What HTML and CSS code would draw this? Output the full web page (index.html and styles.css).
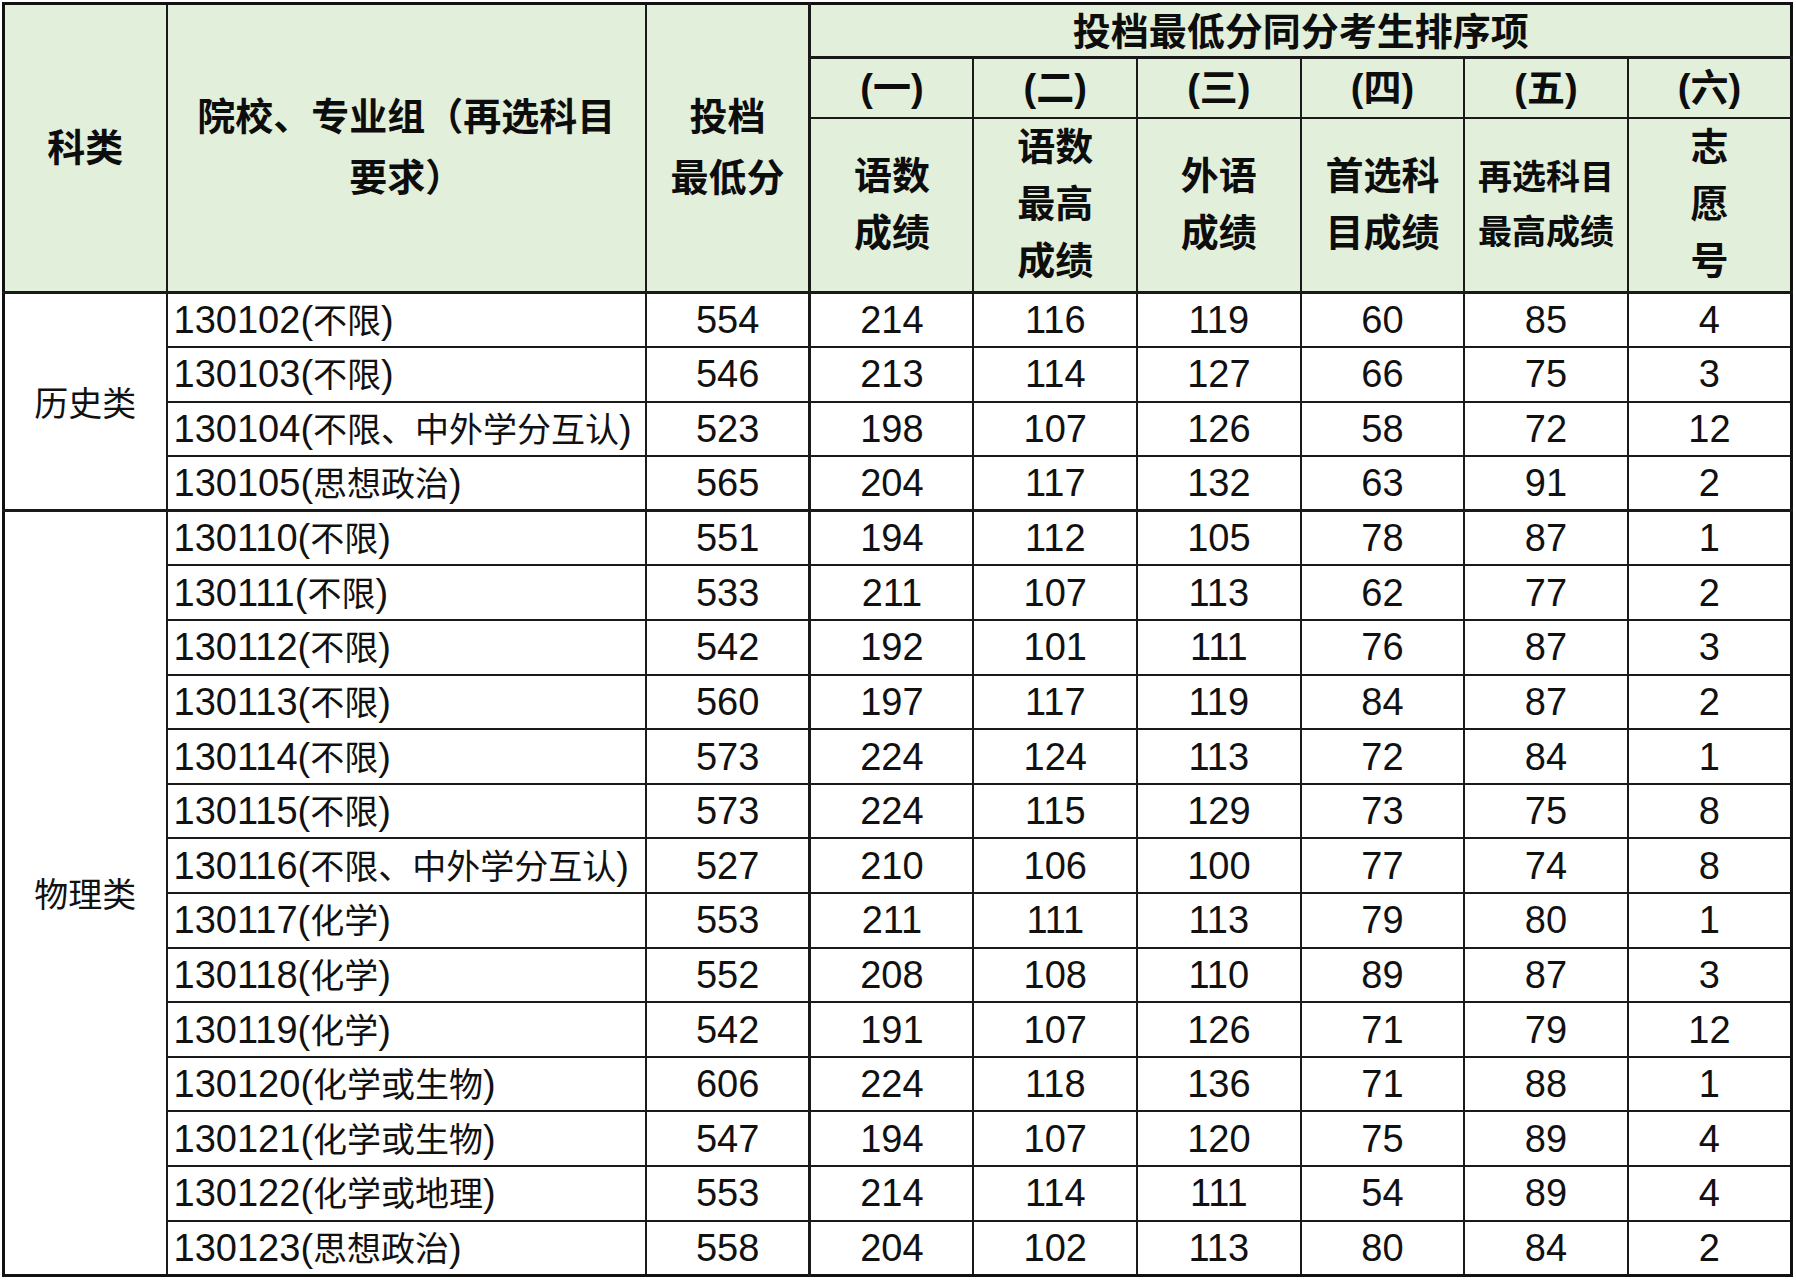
FILE: index.html
```html
<!DOCTYPE html>
<html lang="zh-CN">
<head>
<meta charset="utf-8">
<title>投档最低分同分考生排序项</title>
<link rel="stylesheet" href="styles.css">
</head>
<body>
<table class="sheet">
  <colgroup>
    <col class="c-cat">
    <col class="c-group">
    <col class="c-min">
    <col class="c-s"><col class="c-s"><col class="c-s"><col class="c-s"><col class="c-s"><col class="c-s">
  </colgroup>
  <thead>
    <tr class="h1">
      <th rowspan="3" class="cat">科类</th>
      <th rowspan="3">院校、专业组（再选科目<br>要求）</th>
      <th rowspan="3" class="min">投档<br>最低分</th>
      <th colspan="6" class="span">投档最低分同分考生排序项</th>
    </tr>
    <tr class="h2">
      <th class="first">(一)</th><th>(二)</th><th>(三)</th><th>(四)</th><th>(五)</th><th>(六)</th>
    </tr>
    <tr class="h3">
      <th class="first">语数<br>成绩</th>
      <th>语数<br>最高<br>成绩</th>
      <th>外语<br>成绩</th>
      <th>首选科<br>目成绩</th>
      <th class="small">再选科目<br>最高成绩</th>
      <th>志<br>愿<br>号</th>
    </tr>
  </thead>
  <tbody>
    <tr><td rowspan="4" class="cat">历史类</td><td class="grp">130102(<span class="zh">不限</span>)</td><td>554</td><td class="first">214</td><td>116</td><td>119</td><td>60</td><td>85</td><td>4</td></tr>
    <tr><td class="grp">130103(<span class="zh">不限</span>)</td><td>546</td><td class="first">213</td><td>114</td><td>127</td><td>66</td><td>75</td><td>3</td></tr>
    <tr><td class="grp">130104(<span class="zh">不限、中外学分互认</span>)</td><td>523</td><td class="first">198</td><td>107</td><td>126</td><td>58</td><td>72</td><td>12</td></tr>
    <tr><td class="grp">130105(<span class="zh">思想政治</span>)</td><td>565</td><td class="first">204</td><td>117</td><td>132</td><td>63</td><td>91</td><td>2</td></tr>
    <tr class="sep"><td rowspan="14" class="cat">物理类</td><td class="grp">130110(<span class="zh">不限</span>)</td><td>551</td><td class="first">194</td><td>112</td><td>105</td><td>78</td><td>87</td><td>1</td></tr>
    <tr><td class="grp">130111(<span class="zh">不限</span>)</td><td>533</td><td class="first">211</td><td>107</td><td>113</td><td>62</td><td>77</td><td>2</td></tr>
    <tr><td class="grp">130112(<span class="zh">不限</span>)</td><td>542</td><td class="first">192</td><td>101</td><td>111</td><td>76</td><td>87</td><td>3</td></tr>
    <tr><td class="grp">130113(<span class="zh">不限</span>)</td><td>560</td><td class="first">197</td><td>117</td><td>119</td><td>84</td><td>87</td><td>2</td></tr>
    <tr><td class="grp">130114(<span class="zh">不限</span>)</td><td>573</td><td class="first">224</td><td>124</td><td>113</td><td>72</td><td>84</td><td>1</td></tr>
    <tr><td class="grp">130115(<span class="zh">不限</span>)</td><td>573</td><td class="first">224</td><td>115</td><td>129</td><td>73</td><td>75</td><td>8</td></tr>
    <tr><td class="grp">130116(<span class="zh">不限、中外学分互认</span>)</td><td>527</td><td class="first">210</td><td>106</td><td>100</td><td>77</td><td>74</td><td>8</td></tr>
    <tr><td class="grp">130117(<span class="zh">化学</span>)</td><td>553</td><td class="first">211</td><td>111</td><td>113</td><td>79</td><td>80</td><td>1</td></tr>
    <tr><td class="grp">130118(<span class="zh">化学</span>)</td><td>552</td><td class="first">208</td><td>108</td><td>110</td><td>89</td><td>87</td><td>3</td></tr>
    <tr><td class="grp">130119(<span class="zh">化学</span>)</td><td>542</td><td class="first">191</td><td>107</td><td>126</td><td>71</td><td>79</td><td>12</td></tr>
    <tr><td class="grp">130120(<span class="zh">化学或生物</span>)</td><td>606</td><td class="first">224</td><td>118</td><td>136</td><td>71</td><td>88</td><td>1</td></tr>
    <tr><td class="grp">130121(<span class="zh">化学或生物</span>)</td><td>547</td><td class="first">194</td><td>107</td><td>120</td><td>75</td><td>89</td><td>4</td></tr>
    <tr><td class="grp">130122(<span class="zh">化学或地理</span>)</td><td>553</td><td class="first">214</td><td>114</td><td>111</td><td>54</td><td>89</td><td>4</td></tr>
    <tr><td class="grp">130123(<span class="zh">思想政治</span>)</td><td>558</td><td class="first">204</td><td>102</td><td>113</td><td>80</td><td>84</td><td>2</td></tr>
  </tbody>
</table>
</body>
</html>
```

FILE: styles.css
```css
html, body {
  margin: 0;
  padding: 0;
  background: #ffffff;
}

body {
  font-family: "Liberation Sans", "Noto Sans CJK SC", sans-serif;
  color: #111111;
}

.sheet {
  margin: 2px 0 0 2px;
  width: 1791px;
  table-layout: fixed;
  border-collapse: collapse;
  border: 3px solid #111111;
}

.c-cat { width: 163px; }
.c-group { width: 479px; }
.c-min { width: 164px; }
.c-s { width: 163.5px; }

.sheet th,
.sheet td {
  border: 2px solid #1a1a1a;
  padding: 0;
  text-align: center;
  vertical-align: middle;
}

.sheet th {
  background: #e2efda;
  font-family: "Liberation Sans", "Noto Sans CJK SC", sans-serif;
  font-weight: 700;
  font-size: 38px;
  line-height: 61px;
  color: #0d0d0d;
}

.sheet .h1 { height: 54px; }
.sheet .h1 .span { line-height: 46px; padding-top: 3px; border-bottom-width: 3px; }
.sheet .h2 { height: 60px; }
.sheet .h2 th { line-height: 50px; }
.sheet .h3 { height: 175px; }
.sheet .h3 th { line-height: 57px; border-bottom-width: 3px; }
.sheet .h3 th.small { font-size: 34px; line-height: 55px; }
.sheet thead th[rowspan] { border-bottom-width: 3px; }

.sheet .first { border-left-width: 3px; }
.sheet .min { border-right-width: 3px; }

.sheet tbody tr { height: 54.6px; }

.sheet td {
  font-size: 38px;
  line-height: 36px;
  color: #111111;
}

.sheet td.grp {
  text-align: left;
  padding-left: 6px;
  white-space: nowrap;
}

.sheet td.cat {
  font-family: "Noto Sans CJK SC", sans-serif;
  font-size: 34px;
}

.zh {
  font-family: "Noto Sans CJK SC", sans-serif;
  font-size: 34px;
  line-height: 1;
}

.sheet tr.sep td { border-top-width: 3px; }
```
